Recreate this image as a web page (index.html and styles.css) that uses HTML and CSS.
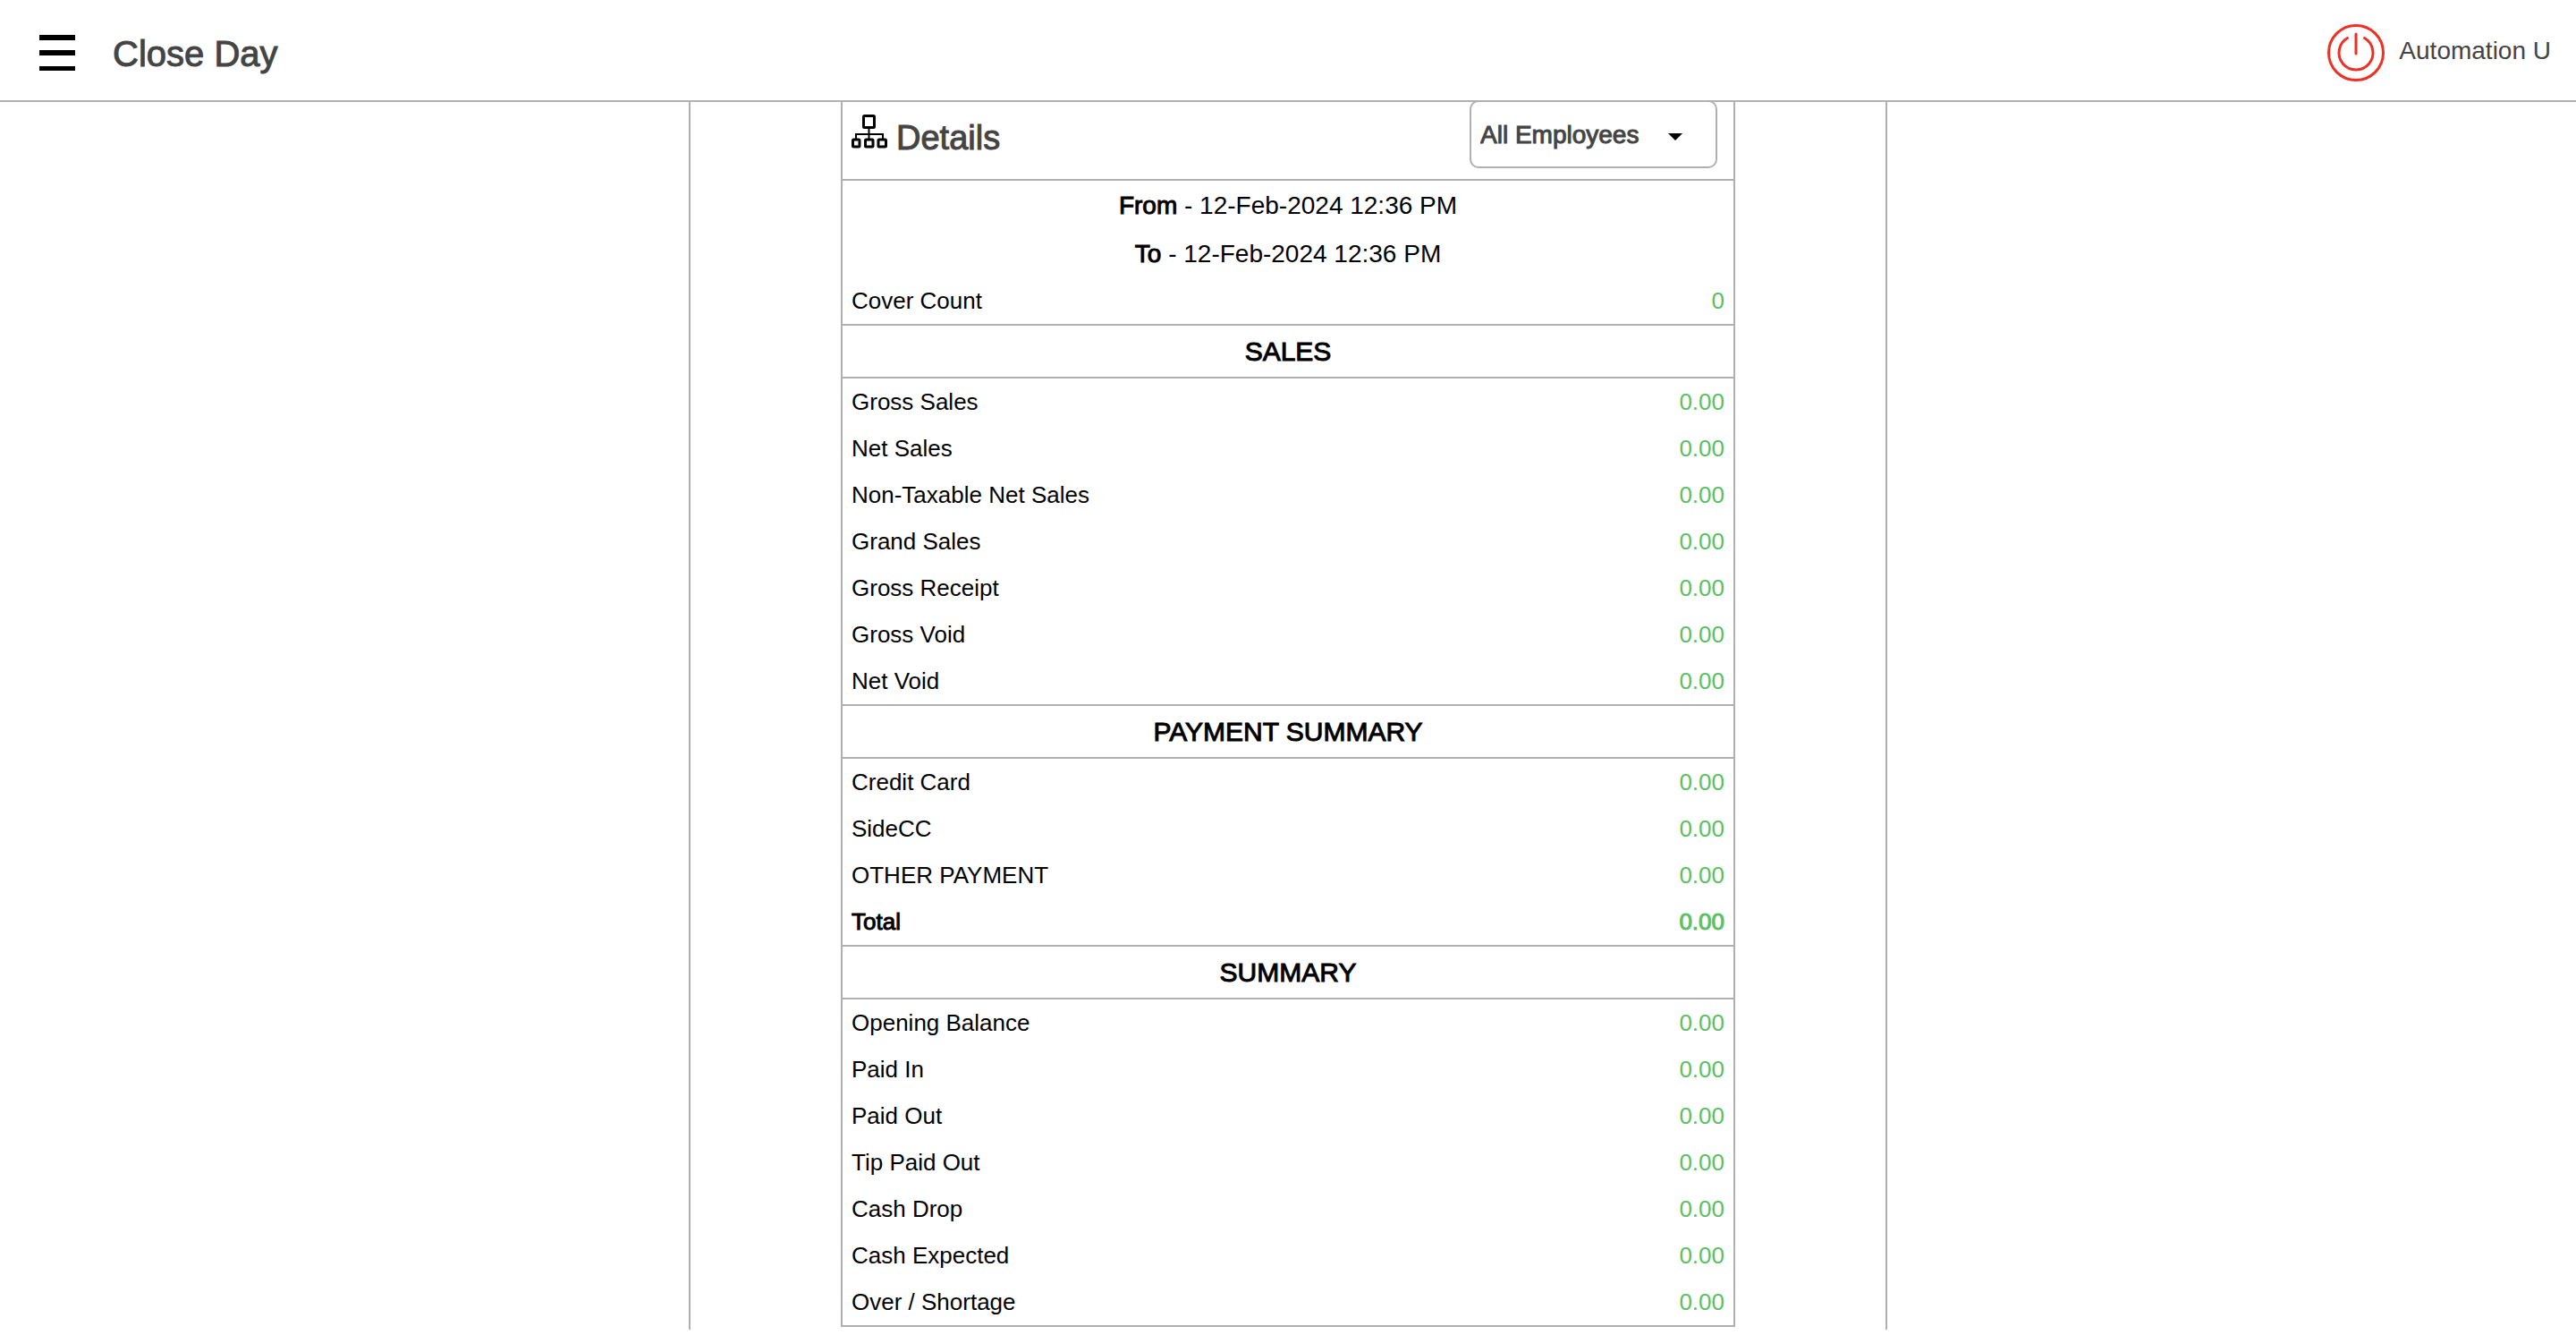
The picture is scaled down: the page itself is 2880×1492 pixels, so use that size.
FILE: index.html
```html
<!DOCTYPE html>
<html lang="en">
<head>
<meta charset="utf-8">
<meta name="viewport" content="width=device-width, initial-scale=1">
<title>Close Day</title>
<link rel="stylesheet" href="styles.css">
</head>
<body>
<header class="topbar">
  <button class="icon-button" type="button" aria-label="Menu">
    <svg width="40" height="40" viewBox="0 0 40 40"><path d="M0 0h40v6H0zM0 17h40v6H0zM0 35h40v5H0z"/></svg>
  </button>
  <h1 class="page-title medium">Close Day</h1>
  <button class="icon-button" type="button" aria-label="Log out">
    <svg width="64" height="64" viewBox="0 0 64 64" fill="none" stroke="#ee3124" stroke-width="3" stroke-linecap="round"><circle cx="32" cy="32" r="30.5"/><path d="M32 11v22"/><path d="M22.5 15.5a19 19 0 1 0 19 0"/></svg>
  </button>
  <span class="user-name">Automation U</span>
</header>
<main class="page">
  <div class="report">
    <div class="report-head">
      <svg class="tree-icon" width="40" height="38" viewBox="0 0 40 38" fill="none" stroke="#000"><g stroke-width="3"><rect x="13.5" y="1.5" width="12" height="13" rx="1"/><rect x="1.500" y="28" width="7.500" height="8" rx="1"/><rect x="15.500" y="28" width="8.500" height="8" rx="1"/><rect x="30" y="28" width="8.500" height="8" rx="1"/></g><path stroke-width="2" d="M19.500 15v12M5 27v-5h30v5"/></svg>
      <h2 class="report-title medium">Details</h2>
      <div class="employee">
        <select class="employee-select medium" aria-label="Employee"><option>All Employees</option></select>
        <svg class="employee-caret" width="16" height="8" viewBox="0 0 16 8"><path d="M0 0h16L8 8z"/></svg>
      </div>
    </div>
    <p class="period"><span class="medium">From</span> - 12-Feb-2024 12:36 PM</p>
    <p class="period"><span class="medium">To</span> - 12-Feb-2024 12:36 PM</p>
    <table class="figures">
      <tr><th scope="row">Cover Count</th><td>0</td></tr>
    </table>
    <h3 class="section-title medium">SALES</h3>
    <table class="figures">
      <tr><th scope="row">Gross Sales</th><td>0.00</td></tr>
      <tr><th scope="row">Net Sales</th><td>0.00</td></tr>
      <tr><th scope="row">Non-Taxable Net Sales</th><td>0.00</td></tr>
      <tr><th scope="row">Grand Sales</th><td>0.00</td></tr>
      <tr><th scope="row">Gross Receipt</th><td>0.00</td></tr>
      <tr><th scope="row">Gross Void</th><td>0.00</td></tr>
      <tr><th scope="row">Net Void</th><td>0.00</td></tr>
    </table>
    <h3 class="section-title medium">PAYMENT SUMMARY</h3>
    <table class="figures">
      <tr><th scope="row">Credit Card</th><td>0.00</td></tr>
      <tr><th scope="row">SideCC</th><td>0.00</td></tr>
      <tr><th scope="row">OTHER PAYMENT</th><td>0.00</td></tr>
      <tr class="medium"><th scope="row">Total</th><td>0.00</td></tr>
    </table>
    <h3 class="section-title medium">SUMMARY</h3>
    <table class="figures">
      <tr><th scope="row">Opening Balance</th><td>0.00</td></tr>
      <tr><th scope="row">Paid In</th><td>0.00</td></tr>
      <tr><th scope="row">Paid Out</th><td>0.00</td></tr>
      <tr><th scope="row">Tip Paid Out</th><td>0.00</td></tr>
      <tr><th scope="row">Cash Drop</th><td>0.00</td></tr>
      <tr><th scope="row">Cash Expected</th><td>0.00</td></tr>
      <tr><th scope="row">Over / Shortage</th><td>0.00</td></tr>
    </table>
  </div>
</main>
</body>
</html>
```
FILE: styles.css
```css
:root {
  --line: #b0b0b0;
  --ink: #444;
  --amount: #5bc062;
}

* {
  box-sizing: border-box;
}

body {
  margin: 0;
  background: #fff;
  color: #000;
  font: 26px/52px "Helvetica Neue", "Liberation Sans", Arial, sans-serif;
}

h1,
h2,
h3,
p {
  margin: 0;
  font-weight: 400;
}

/* Medium weight, drawn as a slightly thickened regular */
.medium {
  -webkit-text-stroke: 1px currentColor;
}

.topbar {
  position: sticky;
  top: 0;
  z-index: 1;
  display: flex;
  align-items: center;
  height: 114px;
  padding: 6px 28px 0 44px;
  border-bottom: 2px solid var(--line);
  background: #fff;
  color: var(--ink);
}

.icon-button {
  display: flex;
  padding: 0;
  border: 0;
  background: none;
}

.page-title {
  flex: 1;
  margin-left: 42px;
  padding-top: 2px;
  font-size: 40px;
}

.user-name {
  margin-left: 16px;
  padding-bottom: 4px;
  font-size: 28px;
}

.page {
  max-width: 1340px;
  /* The top of the report is tucked under the sticky bar */
  margin: -14px auto 0;
  padding: 0 168px 3px;
  border: solid var(--line);
  border-width: 0 2px;
}

.report {
  border: 2px solid var(--line);
  border-top: 0;
}

.report-head {
  display: flex;
  align-items: center;
  height: 102px;
  padding: 0 18px 0 10px;
  border-bottom: 2px solid var(--line);
  color: var(--ink);
}

.tree-icon {
  margin-bottom: 6px;
}

.report-title {
  flex: 1;
  margin: 8px 0 0 10px;
  font-size: 38px;
}

.employee {
  position: relative;
}

.employee-select {
  display: block;
  width: 277px;
  height: 76px;
  padding: 2px 60px 0 10px;
  border: 2px solid var(--line);
  border-radius: 10px;
  appearance: none;
  background: #fff;
  color: inherit;
  font: inherit;
  font-size: 28px;
}

.employee-caret {
  position: absolute;
  top: 37px;
  right: 39px;
  fill: #000;
  pointer-events: none;
}

.period {
  padding-top: 2px;
  font-size: 28px;
  line-height: 52px;
  text-align: center;
}

.section-title {
  border: solid var(--line);
  border-width: 2px 0;
  font-size: 30px;
  line-height: 57px;
  text-align: center;
}

.figures {
  width: 100%;
  border-collapse: collapse;
}

.figures th,
.figures td {
  padding: 0 10px;
  font-weight: 400;
  text-align: left;
}

.figures td {
  color: var(--amount);
  text-align: right;
}
```
